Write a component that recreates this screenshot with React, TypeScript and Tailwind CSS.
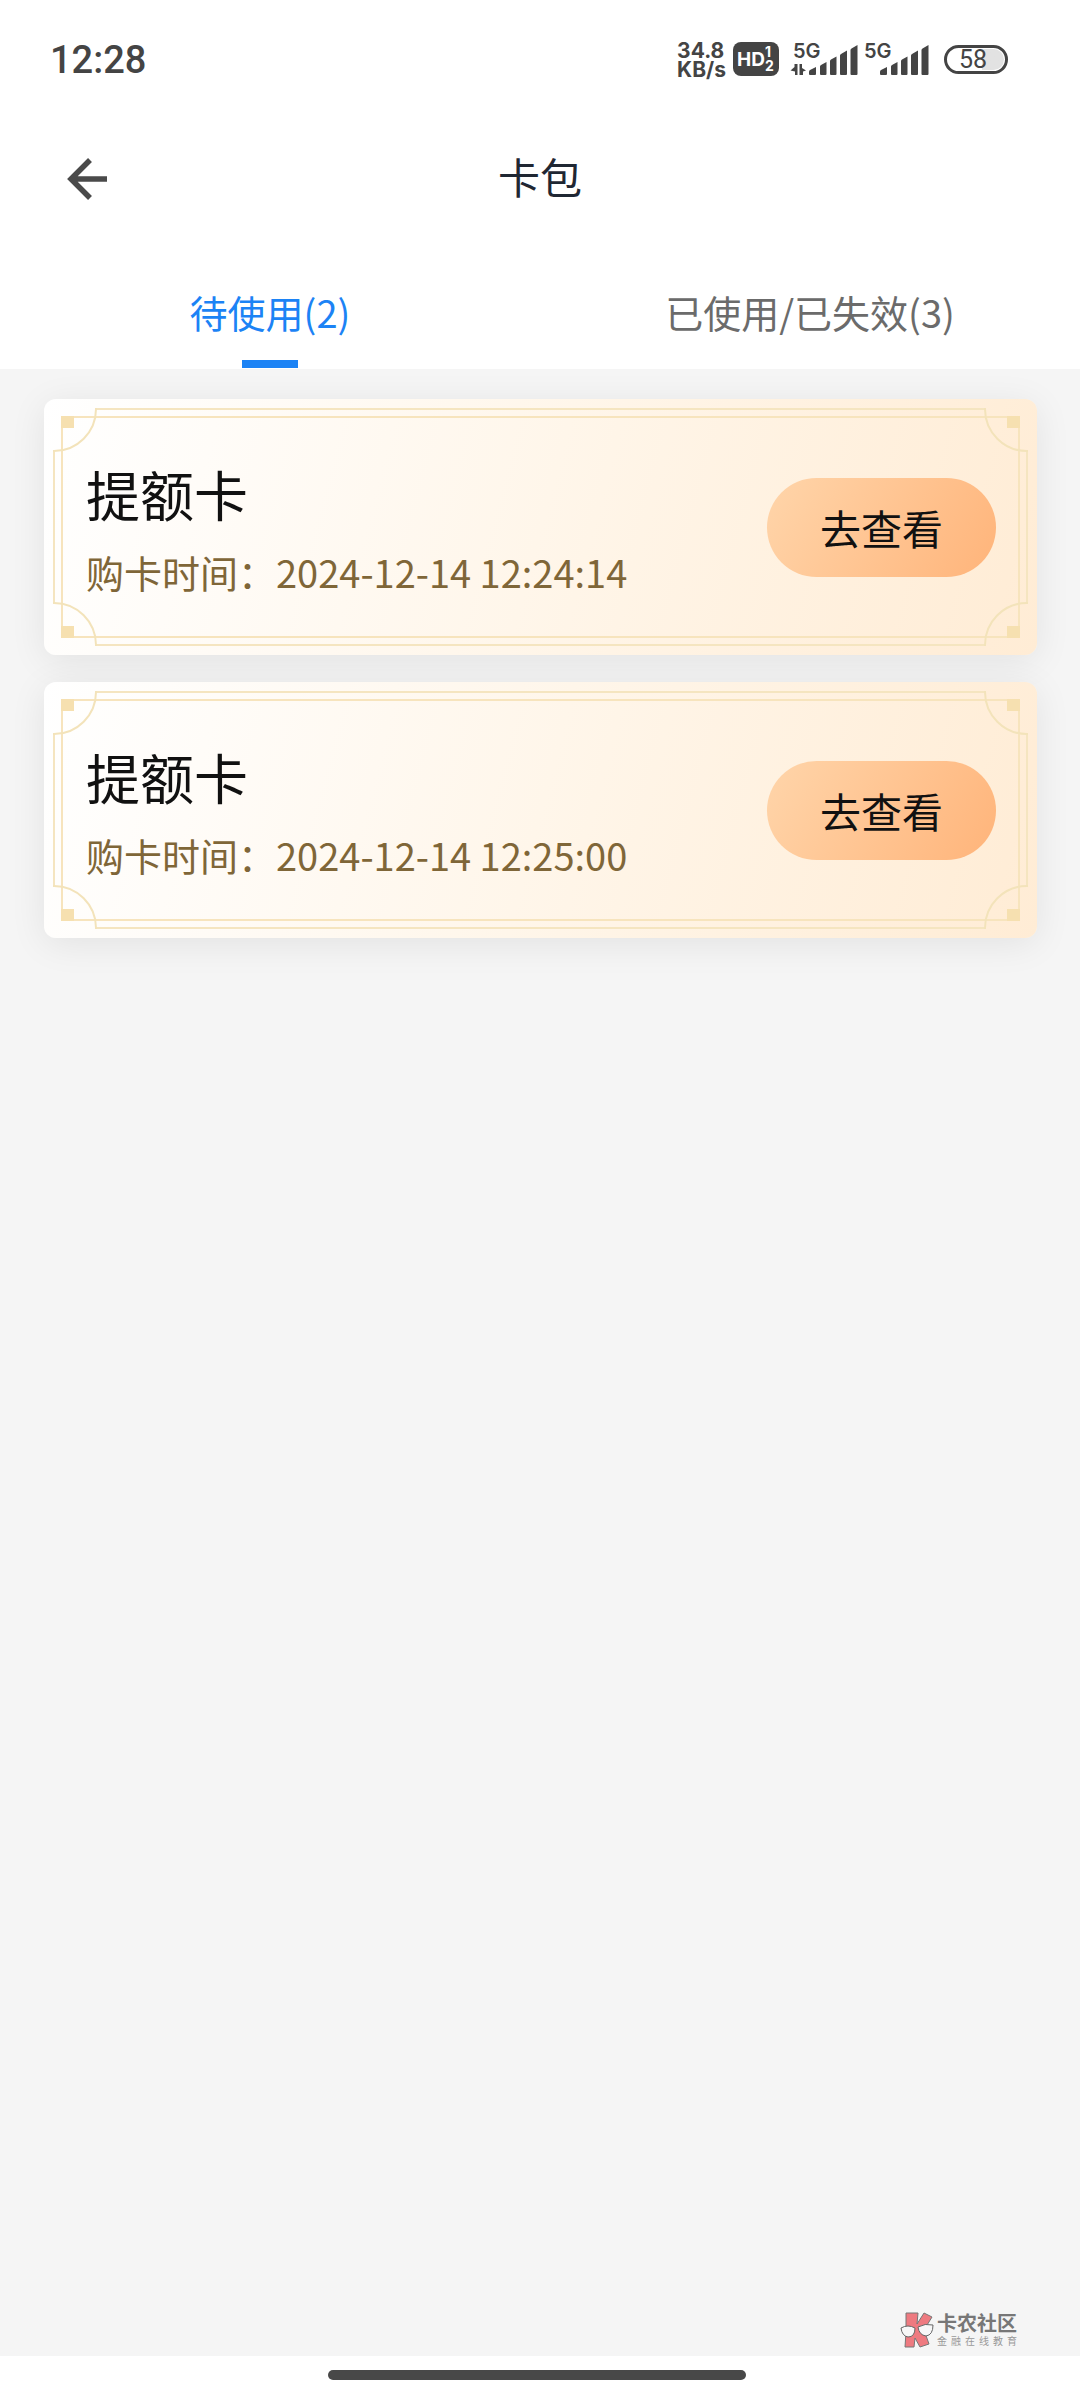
import { useState } from "react";

interface Coupon {
  id: number;
  name: string;
  boughtAt: string;
}

const coupons: Coupon[] = [
  { id: 1, name: "提额卡", boughtAt: "2024-12-14 12:24:14" },
  { id: 2, name: "提额卡", boughtAt: "2024-12-14 12:25:00" },
];

const tabs = ["待使用(2)", "已使用/已失效(3)"];

function SignalBars({ data }: { data?: boolean }) {
  return (
    <div className="relative w-[66px] h-8">
      <span className="absolute left-0 top-0 font-[Inter] text-[20px] leading-4 font-semibold">5G</span>
      <svg className="absolute inset-0 overflow-visible" width="66" height="32" viewBox="0 0 66 32" fill="currentColor">
        {data && <path d="M4.500 21v11H2v-3.500L-2.500 27.500 1.500 24V21zM6.500 21H9v4l4 2.500-3 1V32H6.500z" />}
        <path d="M16 29q0-1.500 1-2l6-3v7a1 1 0 0 1-1 1h-5a1 1 0 0 1-1-1z" />
        <path d="M27 23.500q0-1 1-1.500l5.500-3v12a1 1 0 0 1-1 1H28a1 1 0 0 1-1-1z" />
        <path d="M37 18q0-1 1-1.500l5.500-3v17.500a1 1 0 0 1-1 1H38a1 1 0 0 1-1-1z" />
        <path d="M47 12.500q0-1 1-1.500l6-3.500V31a1 1 0 0 1-1 1h-5a1 1 0 0 1-1-1z" />
        <path d="M57.500 7q0-1 1-1.500l6-3.500v29a1 1 0 0 1-1 1h-5a1 1 0 0 1-1-1z" />
      </svg>
    </div>
  );
}

function StatusBar() {
  return (
    <div className="flex items-center justify-between h-[118px] pl-[50px] pr-[72px] text-[#444]">
      <span className="pt-0.5 font-[Roboto] text-[38px] leading-none font-medium">12:28</span>
      <div className="flex items-center">
        <div className="pt-px font-[Inter] text-[21px] leading-[19px] font-bold">
          <div>34.8</div>
          <div>KB/s</div>
        </div>
        <div className="ml-[7px] flex items-center w-[46px] h-[34px] pl-1 rounded-lg bg-[#444] text-white font-[Inter] font-bold">
          <span className="text-[19px] leading-none">HD</span>
          <span className="flex flex-col text-[14px] leading-[14px]">
            <span>1</span>
            <span>2</span>
          </span>
        </div>
        <div className="ml-3.5 flex gap-[5px]">
          <SignalBars data />
          <SignalBars />
        </div>
        <div className="ml-3.5 w-16 h-[29px] p-px rounded-full border-3 border-[#444]">
          <div className="h-full flex items-center justify-center pr-1.5 rounded-full bg-linear-to-r from-white from-60% to-[#e2e2e2] to-60% font-[Roboto] text-[25px] leading-none">
            58
          </div>
        </div>
      </div>
    </div>
  );
}

function FrameCorner({ className }: { className: string }) {
  return (
    <svg className={`absolute w-[54px] h-[54px] ${className}`} viewBox="0 0 54 54" fill="none">
      <path d="M52 9v1A42 42 0 0 1 10 52H9" stroke="#f3e3ba" strokeWidth="2" />
      <rect x="17" y="17" width="13" height="12" fill="#f6e0b0" />
    </svg>
  );
}

function CardFrame() {
  return (
    <div className="absolute inset-0 pointer-events-none">
      <div className="absolute inset-[17px] border-2 border-[#f7e4bd]" />
      <div className="absolute inset-x-[51px] inset-y-[9px] border-y-2 border-[#f5e5c0]" />
      <div className="absolute inset-x-[9px] inset-y-[51px] border-x-2 border-[#f5e5c0]" />
      <FrameCorner className="left-0 top-0" />
      <FrameCorner className="right-0 top-0 -scale-x-100" />
      <FrameCorner className="left-0 bottom-0 -scale-y-100" />
      <FrameCorner className="right-0 bottom-0 -scale-100" />
    </div>
  );
}

function CouponCard({ coupon }: { coupon: Coupon }) {
  return (
    <li className="relative flex items-center justify-between h-64 px-[41px] rounded-xl bg-linear-[105deg] from-white via-[#fff6ea] to-[#ffecd5] shadow-[0_6px_36px_rgba(0,0,0,0.08)]">
      <CardFrame />
      <div className="pt-1 pl-px">
        <h2 className="text-[54px] leading-[72px] text-[#111]">{coupon.name}</h2>
        <p className="mt-3.5 text-[38px] leading-[56px] text-[#7f6638]">购卡时间：{coupon.boughtAt}</p>
      </div>
      <button type="button" className="relative w-[229px] h-[99px] pt-0.5 rounded-full bg-linear-[120deg] from-[#ffd5aa] to-[#ffb47a] text-[41px] text-[#111]">
        去查看
      </button>
    </li>
  );
}

function Watermark() {
  return (
    <div className="flex items-center gap-[3px]">
      <svg width="34" height="36" viewBox="0 0 34 36">
        <path d="M6 1h12l-1 11 7-11 8 4-8 13 5 14-9 3-5-9-1 9H5l1-15z" fill="#ee7a80" stroke="#777" strokeWidth="1" />
        <path d="M1 16q7-4 14 0 0 9-7 9-6-1-7-9zM18 15q7-4 15-2 0 10-7 11-7-1-8-9z" fill="#f7f7f7" stroke="#666" strokeWidth="1" />
      </svg>
      <div className="flex flex-col">
        <span className="text-[20px] leading-[22px] font-bold text-[#777]">卡农社区</span>
        <span className="flex justify-between text-[10px] leading-[14px] text-[#999]">
          {Array.from("金融在线教育").map((c) => (
            <span key={c}>{c}</span>
          ))}
        </span>
      </div>
    </div>
  );
}

export default function App() {
  const [active, setActive] = useState(0);

  return (
    <div className="flex flex-col min-h-screen bg-[#f5f5f5] font-['Noto_Sans_CJK_SC',sans-serif]">
      <header className="bg-white">
        <StatusBar />
        <div className="grid grid-cols-[1fr_auto_1fr] items-center h-[122px] px-[60px]">
          <button type="button" aria-label="返回" className="justify-self-start text-[#4a4a4a]">
            <svg width="48" height="48" viewBox="0 0 48 48" fill="none" stroke="currentColor" strokeWidth="5.500">
              <path d="M47 24H11M30 5L11 24l19 19" />
            </svg>
          </button>
          <h1 className="pb-1.5 text-[42px] leading-[60px] text-[#1f2733]">卡包</h1>
        </div>
        <nav className="grid grid-cols-2 h-[129px]">
          {tabs.map((t, i) => (
            <button
              key={t}
              type="button"
              onClick={() => setActive(i)}
              className={`flex flex-col items-center justify-end pb-px text-[38px] leading-[56px] ${active === i ? "text-[#1c83f5]" : "text-[#6b6b6b]"}`}
            >
              {t}
              <span className={`mt-5 w-14 h-2 ${active === i ? "bg-[#1c83f5]" : ""}`} />
            </button>
          ))}
        </nav>
      </header>

      <main className="flex-1 flex flex-col pl-11 pr-[43px] pt-[30px]">
        <ul className="flex flex-col gap-[27px]">
          {coupons.map((c) => (
            <CouponCard key={c.id} coupon={c} />
          ))}
        </ul>
        <div className="mt-auto self-end pb-2 pr-5">
          <Watermark />
        </div>
      </main>

      <footer className="flex justify-center h-11 pt-3.5 pr-1.5 bg-white">
        <div className="w-[418px] h-2.5 rounded-full bg-[#484848]" />
      </footer>
    </div>
  );
}
